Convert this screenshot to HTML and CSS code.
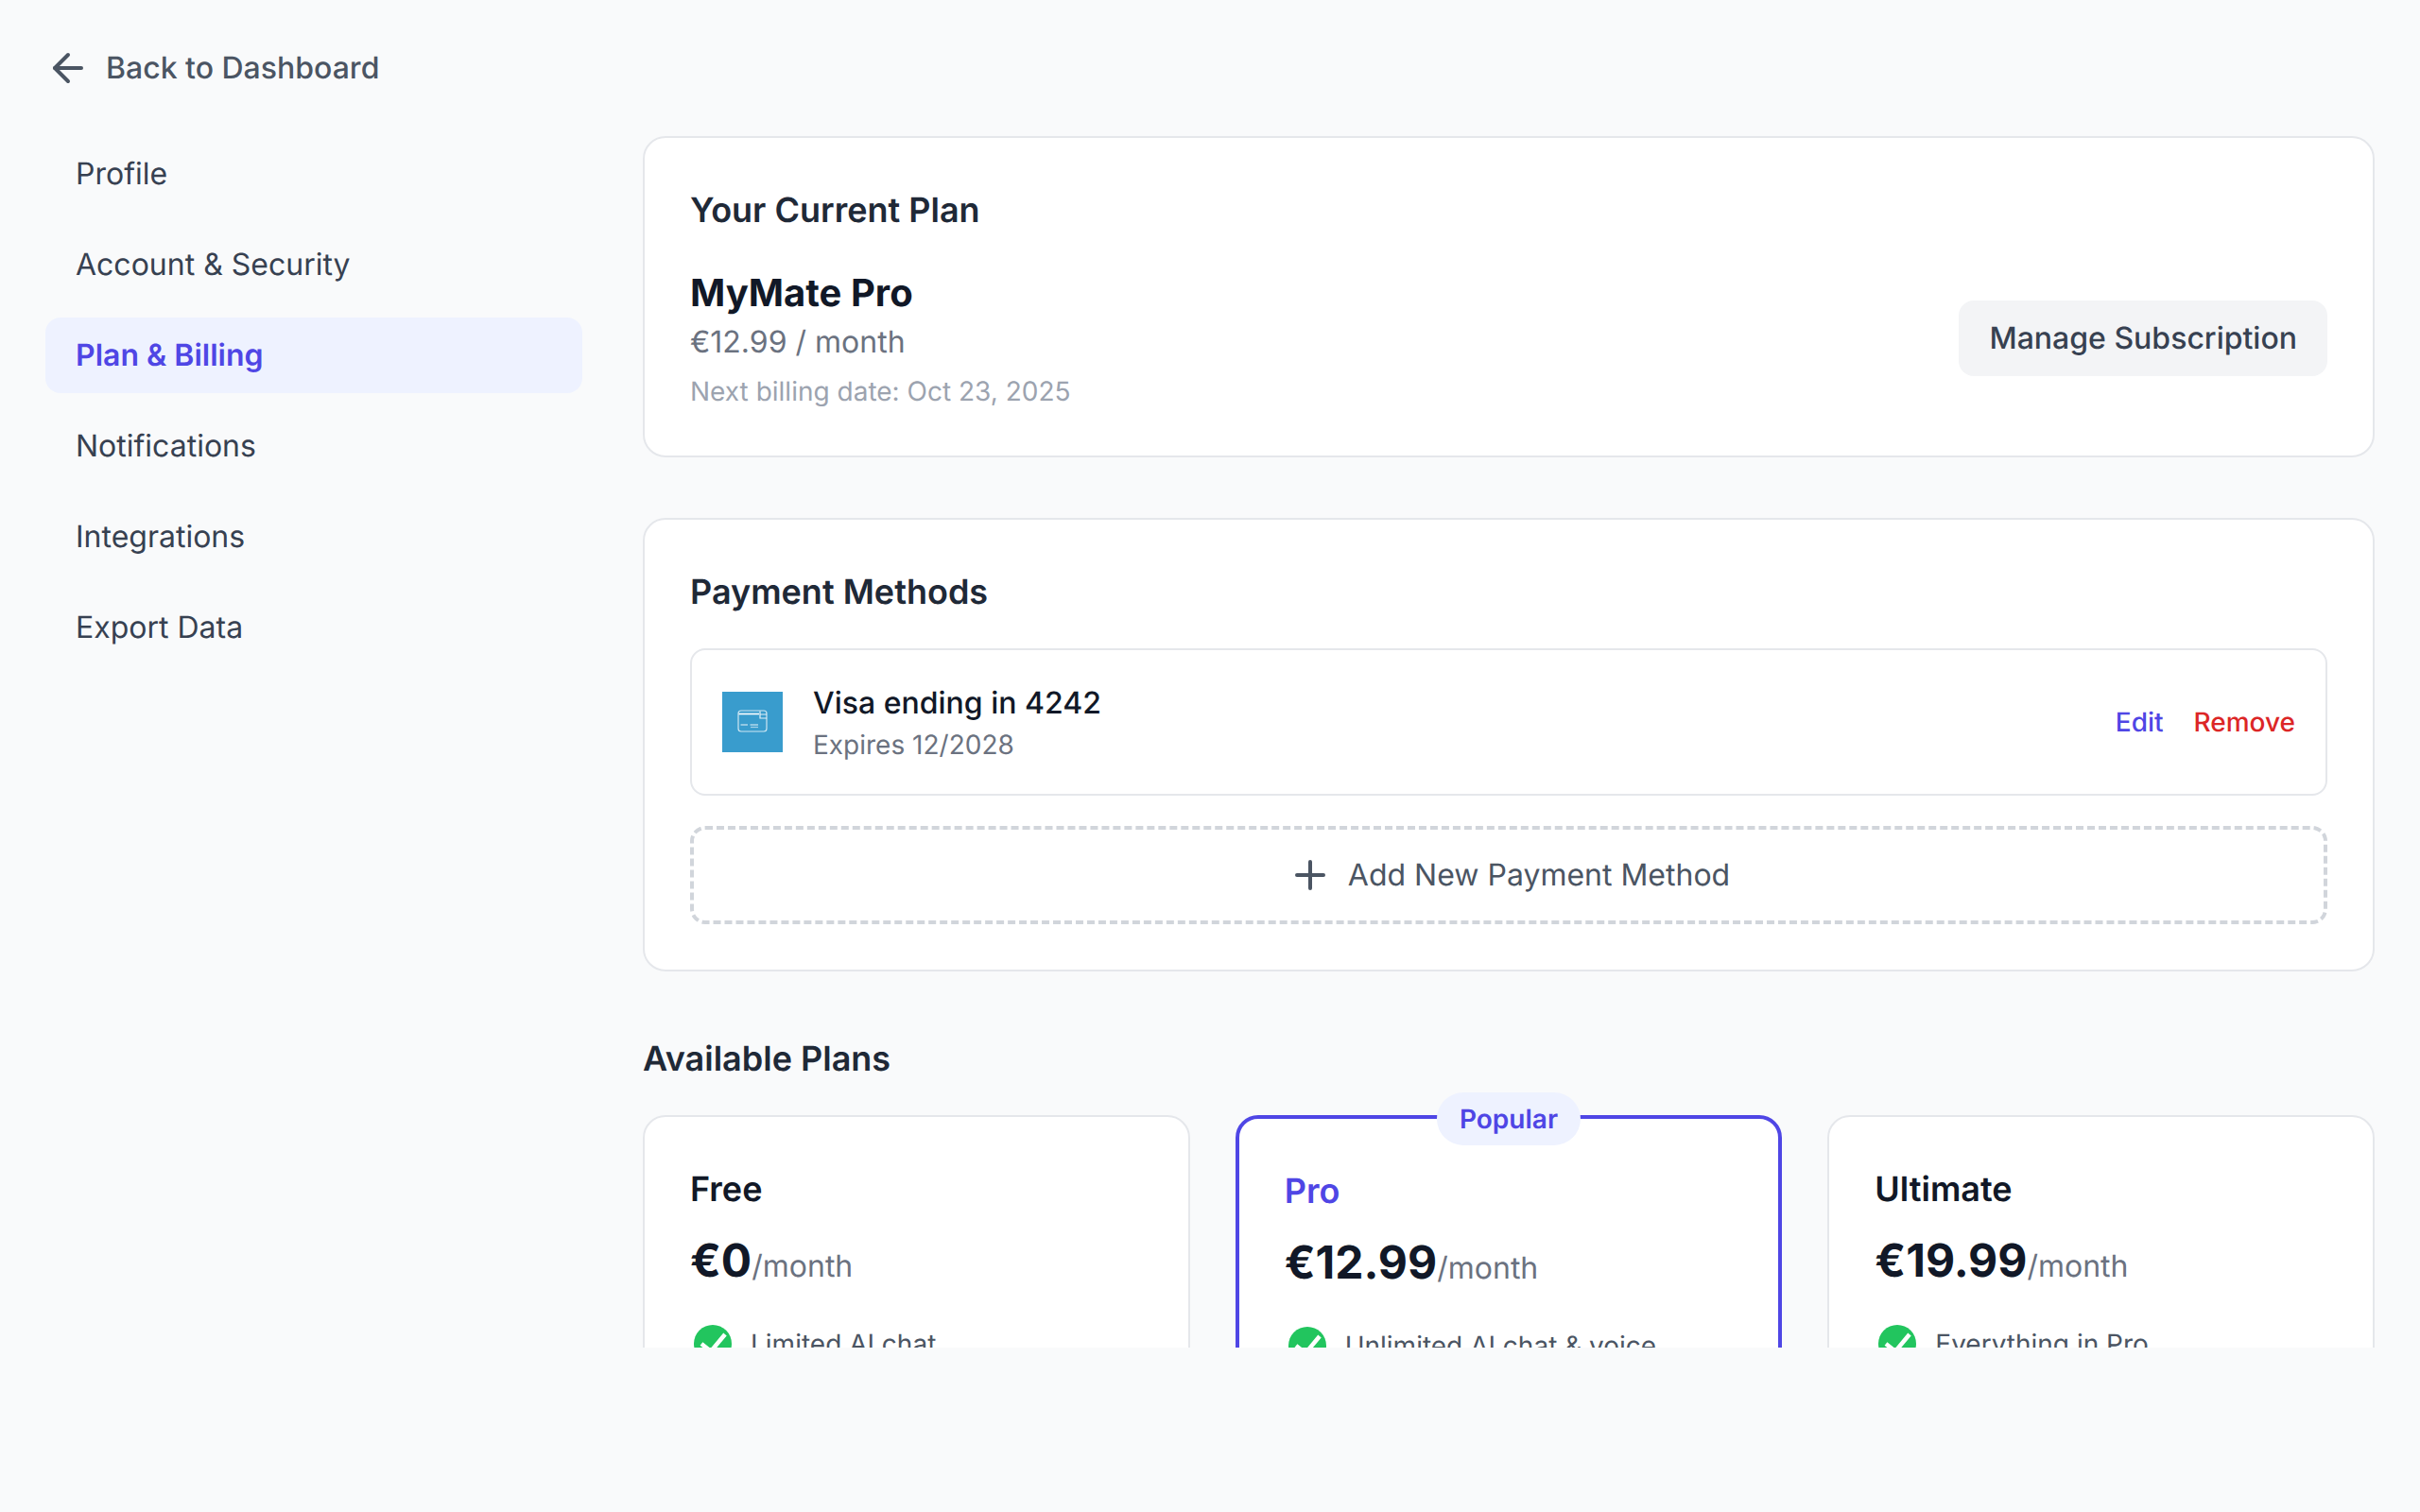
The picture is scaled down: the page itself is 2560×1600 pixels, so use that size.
FILE: index.html
```html
<!DOCTYPE html>
<html lang="en">
<head>
    <meta charset="UTF-8">
    <meta name="viewport" content="width=device-width, initial-scale=1.0">
    <title>Plan &amp; Billing</title>
    <link rel="stylesheet" href="styles.css">
</head>
<body>
<div class="layout">
    <aside class="sidebar">
        <a class="back_link" href="#">
            <svg class="icon_48" viewBox="0 0 24 24" fill="none" stroke="currentColor" stroke-width="2" stroke-linecap="round" stroke-linejoin="round"><path d="m12 19-7-7 7-7"/><path d="M19 12H5"/></svg>
            <span>Back to Dashboard</span>
        </a>
        <nav class="side_nav">
            <a class="nav_item" href="#">Profile</a>
            <a class="nav_item" href="#">Account &amp; Security</a>
            <a class="nav_item active" href="#">Plan &amp; Billing</a>
            <a class="nav_item" href="#">Notifications</a>
            <a class="nav_item" href="#">Integrations</a>
            <a class="nav_item" href="#">Export Data</a>
        </nav>
    </aside>

    <main class="main_col">
        <section class="card">
            <h2 class="card_title">Your Current Plan</h2>
            <div class="plan_row">
                <div>
                    <div class="plan_name">MyMate Pro</div>
                    <div class="plan_price">€12.99 / month</div>
                    <div class="plan_next">Next billing date: Oct 23, 2025</div>
                </div>
                <button class="manage_btn">Manage Subscription</button>
            </div>
        </section>

        <section class="card">
            <h2 class="card_title">Payment Methods</h2>
            <div class="pay_row">
                <div class="pay_info">
                    <div class="pay_logo">
                        <svg viewBox="0 0 64 64" width="64" height="64" fill="none" stroke="#fff" stroke-width="1.2">
                            <rect x="17" y="20" width="30" height="22" rx="3" opacity="0.75"/>
                            <path d="M17.5 23.5H39" stroke-width="1.6"/>
                            <path d="M40 20.5V28H47M40 24H47" opacity="0.85"/>
                            <path d="M19.5 35H27M29.500 35H38" opacity="0.9"/>
                            <path d="M30 37.500H38" opacity="0.55"/>
                        </svg>
                    </div>
                    <div>
                        <div class="pay_name">Visa ending in 4242</div>
                        <div class="pay_exp">Expires 12/2028</div>
                    </div>
                </div>
                <div class="pay_actions">
                    <a class="link_edit" href="#">Edit</a>
                    <a class="link_remove" href="#">Remove</a>
                </div>
            </div>
            <button class="add_btn">
                <svg class="icon_48" viewBox="0 0 24 24" fill="none" stroke="currentColor" stroke-width="2" stroke-linecap="round" stroke-linejoin="round"><path d="M5 12h14"/><path d="M12 5v14"/></svg>
                <span>Add New Payment Method</span>
            </button>
        </section>

        <section>
            <h2 class="section_title">Available Plans</h2>
            <div class="plans_grid">
                <div class="plan_card">
                    <h3 class="tier_name">Free</h3>
                    <div class="tier_price">€0<span class="per_month">/month</span></div>
                    <div class="feature">
                        <svg class="icon_48" viewBox="0 0 48 48"><circle class="check_disc" cx="24" cy="24" r="20"/><path class="check_mark" d="M12 24l10 8 15-18"/></svg>
                        <span>Limited AI chat</span>
                    </div>
                </div>
                <div class="plan_card featured">
                    <span class="popular_tag">Popular</span>
                    <h3 class="tier_name">Pro</h3>
                    <div class="tier_price">€12.99<span class="per_month">/month</span></div>
                    <div class="feature">
                        <svg class="icon_48" viewBox="0 0 48 48"><circle class="check_disc" cx="24" cy="24" r="20"/><path class="check_mark" d="M12 24l10 8 15-18"/></svg>
                        <span>Unlimited AI chat &amp; voice</span>
                    </div>
                </div>
                <div class="plan_card">
                    <h3 class="tier_name">Ultimate</h3>
                    <div class="tier_price">€19.99<span class="per_month">/month</span></div>
                    <div class="feature">
                        <svg class="icon_48" viewBox="0 0 48 48"><circle class="check_disc" cx="24" cy="24" r="20"/><path class="check_mark" d="M12 24l10 8 15-18"/></svg>
                        <span>Everything in Pro</span>
                    </div>
                </div>
            </div>
        </section>
    </main>
</div>
</body>
</html>
```

FILE: styles.css
```css
* {
    box-sizing: border-box;
}

body {
    margin: 0;
    height: 1600px;
    overflow: hidden;
    background-color: #f9fafb;
    font-family: Inter, "Liberation Sans", sans-serif;
    font-size: 32px;
    line-height: 48px;
    color: #111827;
    text-rendering: geometricPrecision;
    font-optical-sizing: none;
}

a {
    text-decoration: none;
}

h2, h3 {
    margin: 0;
}

button {
    font-family: inherit;
    text-rendering: inherit;
    cursor: pointer;
}

.icon_48 {
    width: 48px;
    height: 48px;
    flex-shrink: 0;
}

/* page frame, the scroll area stops above the window bottom */
.layout {
    display: flex;
    gap: 64px;
    height: 1426px;
    padding: 48px 48px 0;
    overflow: hidden;
}

/* sidebar */
.sidebar {
    flex: 0 0 568px;
}

.back_link {
    display: flex;
    align-items: center;
    gap: 16px;
    margin-bottom: 48px;
    color: #4b5563;
    font-weight: 500;
}

.side_nav {
    display: flex;
    flex-direction: column;
    gap: 16px;
}

.nav_item {
    padding: 16px 32px;
    border-radius: 16px;
    color: #374151;
}

.nav_item.active {
    background-color: #eef2ff;
    color: #4f46e5;
    font-weight: 600;
}

/* main column */
.main_col {
    flex: 1;
    min-width: 0;
    margin-top: 96px;
    display: flex;
    flex-direction: column;
    gap: 64px;
}

.card {
    padding: 48px;
    background-color: #fff;
    border: 2px solid #e5e7eb;
    border-radius: 24px;
}

.card_title {
    margin-bottom: 32px;
    font-size: 36px;
    line-height: 56px;
    font-weight: 600;
    color: #1f2937;
}

.plan_row {
    display: flex;
    align-items: center;
    justify-content: space-between;
}

.plan_name {
    font-size: 40px;
    line-height: 56px;
    font-weight: 700;
}

.plan_price {
    color: #6b7280;
}

.plan_next {
    margin-top: 8px;
    font-size: 28px;
    line-height: 40px;
    color: #9ca3af;
}

.manage_btn {
    padding: 16px 32px;
    border: none;
    border-radius: 16px;
    background-color: #f3f4f6;
    font-size: 32px;
    line-height: 48px;
    font-weight: 500;
    color: #374151;
}

/* payment */
.pay_row {
    display: flex;
    align-items: center;
    justify-content: space-between;
    padding: 32px;
    border: 2px solid #e5e7eb;
    border-radius: 16px;
}

.pay_info {
    display: flex;
    align-items: center;
    gap: 32px;
}

.pay_logo {
    width: 64px;
    height: 64px;
    background-color: #399ccd;
}

.pay_logo svg {
    display: block;
}

.pay_name {
    font-weight: 500;
}

.pay_exp {
    font-size: 28px;
    line-height: 40px;
    color: #6b7280;
}

.pay_actions {
    display: flex;
    gap: 32px;
    font-size: 28px;
    line-height: 40px;
    font-weight: 500;
}

.link_edit {
    color: #4f46e5;
}

.link_remove {
    color: #dc2626;
}

.add_btn {
    display: flex;
    align-items: center;
    justify-content: center;
    gap: 16px;
    width: 100%;
    margin-top: 32px;
    padding: 24px;
    border: 4px dashed #d1d5db;
    border-radius: 16px;
    background: none;
    font-size: 32px;
    line-height: 48px;
    color: #4b5563;
}

/* plans */
.section_title {
    margin-bottom: 32px;
    font-size: 36px;
    line-height: 56px;
    font-weight: 600;
    color: #1f2937;
}

.plans_grid {
    display: grid;
    grid-template-columns: repeat(3, 1fr);
    gap: 48px;
}

.plan_card {
    position: relative;
    padding: 48px;
    background-color: #fff;
    border: 2px solid #e5e7eb;
    border-radius: 24px;
}

.plan_card.featured {
    border: 4px solid #4f46e5;
}

.popular_tag {
    position: absolute;
    top: -28px;
    left: 50%;
    transform: translateX(-50%);
    padding: 8px 24px;
    border-radius: 9999px;
    background-color: #eef2ff;
    font-size: 28px;
    line-height: 40px;
    font-weight: 600;
    color: #4f46e5;
}

.tier_name {
    font-size: 36px;
    line-height: 56px;
    font-weight: 600;
    color: #111827;
}

.featured .tier_name {
    color: #4f46e5;
}

.tier_price {
    margin-top: 16px;
    margin-bottom: 26px;
    font-size: 48px;
    line-height: 64px;
    font-weight: 700;
}

.per_month {
    font-size: 32px;
    font-weight: 400;
    color: #6b7280;
}

.feature {
    display: flex;
    align-items: center;
    gap: 16px;
    font-size: 28px;
    line-height: 40px;
    color: #4b5563;
}

.check_disc {
    fill: #22c55e;
}

.check_mark {
    fill: none;
    stroke: #fff;
    stroke-width: 4.5;
}
```
